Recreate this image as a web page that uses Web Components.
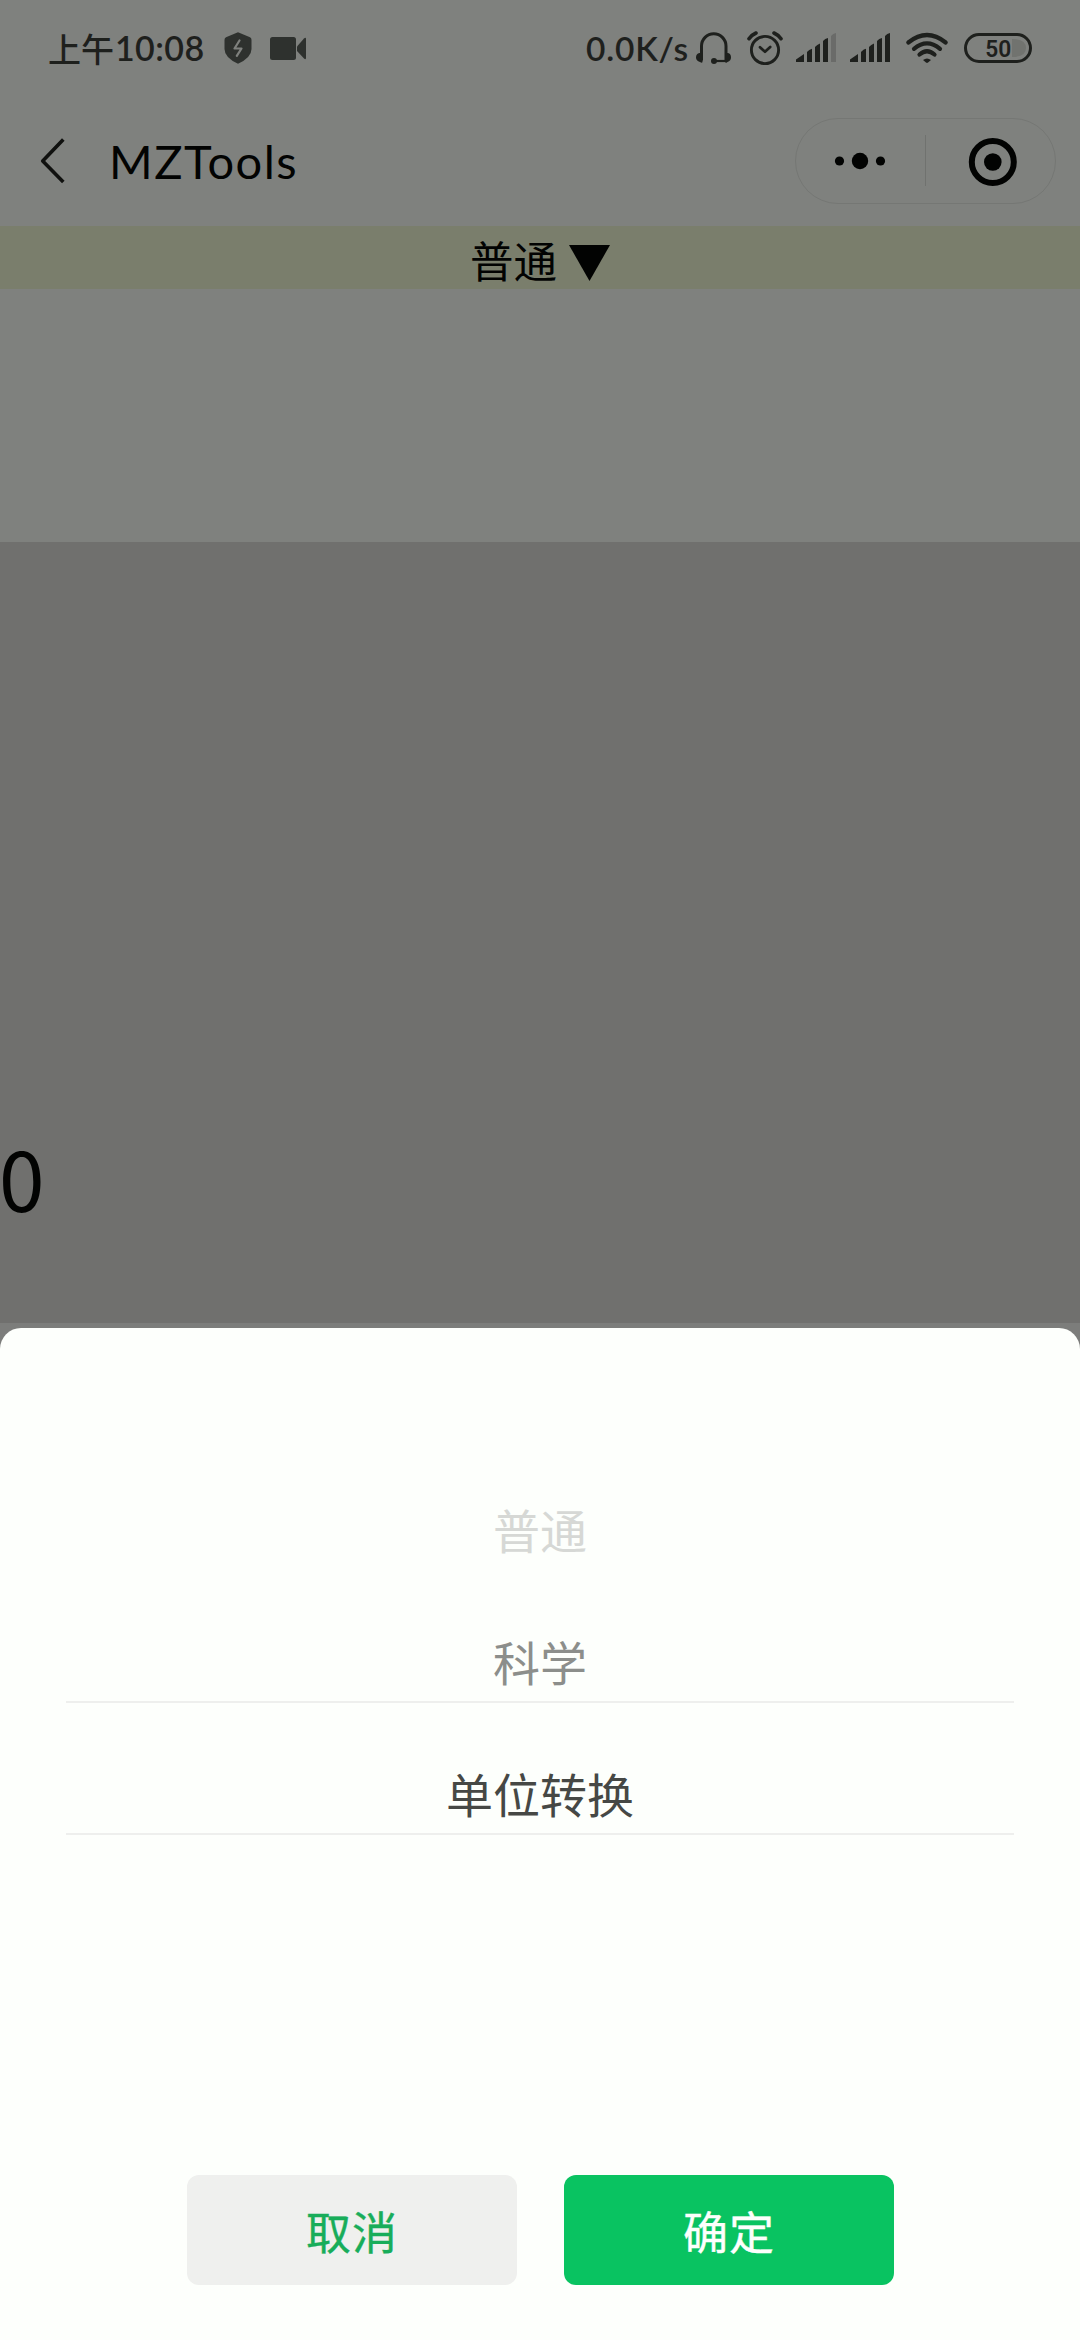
<!DOCTYPE html>
<html lang="zh-CN">
<head>
<meta charset="utf-8">
<title>MZTools</title>
<style>
html,body{margin:0;padding:0}
body{width:1080px;height:2340px;overflow:hidden;background:#7f817e;font-family:"Noto Sans CJK SC",sans-serif}
</style>
</head>
<body>
<mz-app></mz-app>
<script>
function define(name, html) {
  const t = document.createElement('template');
  t.innerHTML = html;
  customElements.define(name, class extends HTMLElement {
    constructor() {
      super();
      this.attachShadow({mode: 'open'}).appendChild(t.content.cloneNode(true));
    }
  });
}

define('status-bar', `
<style>
:host{display:flex;height:96px;box-sizing:border-box;padding-left:48px;color:#1e201d;align-items:flex-start;font-family:Lato,"Noto Sans CJK SC",sans-serif;font-weight:600}
.t{white-space:nowrap;line-height:40px;margin-top:28px;flex:none}
.cn{font:500 33px/40px "Noto Sans CJK SC",sans-serif;width:67px}
.clock{font-size:34px;width:109px;letter-spacing:.4px}
.rate{font-size:33.5px;width:108px;padding-left:2px;letter-spacing:.8px}
svg{display:block;flex:none}
</style>
<span class="t cn">上午</span><span class="t clock">10:08</span>
<svg width="360" height="96" viewBox="224 0 360 96">
  <path d="M238 32.300 L250 37.200 Q251.500 38 251.500 40 V49 Q251.500 57.500 238 63.800 Q224.500 57.500 224.500 49 V40 Q224.500 38 226 37.200Z" fill="#2e312e"/>
  <path d="M239.500 40.500 L234.500 48.500 H241.500 L236.800 55.800" fill="none" stroke="#7f817e" stroke-width="2.200" stroke-linejoin="round" stroke-linecap="round"/>
  <rect x="270" y="37" width="26" height="23" rx="2.500" fill="#2e312e"/>
  <path d="M297 46.500 L304 38.500 Q306 37 306 39 V58 Q306 60 304 58.500 L297 51Z" fill="#2e312e"/>
</svg>
<span class="t rate">0.0K/s</span>
<svg width="168" height="96" viewBox="694 0 168 96">
  <path d="M701.500 60.500 V46 A12.250 12.250 0 0 1 726 46 V60.500" fill="none" stroke="#1e201d" stroke-width="3"/>
  <path d="M702.500 53 V62 Q702 63.500 700 62 Q696 60.500 696 57.500 Q696 53.500 699.500 53ZM725 53 V62 Q726 63.500 727.500 62 Q731 60.500 731 57.500 Q731 53.500 728 53Z" fill="#1e201d"/>
  <path d="M714 61 H727" stroke="#1e201d" stroke-width="2.200"/><circle cx="714" cy="61" r="3" fill="#1e201d"/>
  <circle cx="765" cy="50" r="13.600" fill="none" stroke="#1e201d" stroke-width="2.900"/>
  <path d="M749 38.700 Q751.500 35 756 33 M781 38.700 Q778.500 35 774 33" fill="none" stroke="#1e201d" stroke-width="3.600" stroke-linecap="round"/>
  <path d="M760 47.200 L765 51.800 L770.200 47" fill="none" stroke="#1e201d" stroke-width="2.700" stroke-linecap="round" stroke-linejoin="round"/>
  <path fill="#1e201d" d="M796 62 V59.500 L804 54 V62ZM807 62 V52 Q809 49.500 812 48.800 V62ZM815 62 V47 Q817 44.500 820 43.500 V62ZM823 62 V41 Q825 38.500 828 38 V62Z"/>
  <path d="M831 62 V36 Q833 33.500 836 33 V62Z" fill="#6a6b69"/>
  <path fill="#1e201d" d="M850 62 V59.500 L858 54 V62ZM861 62 V52 L862 51V62Z"/>
</svg>
<svg width="218" height="96" viewBox="862 0 218 96">
  <path fill="#1e201d" d="M861 62 V52 Q863 49.500 866 48.800 V62ZM869 62 V47 Q871 44.500 874 43.500 V62ZM877 62 V41 Q879 38.500 882 38 V62ZM885 62 V36 Q887 33.500 890 33 V62Z"/>
  <g fill="none" stroke="#1e201d" stroke-width="4.200" stroke-linecap="round"><path d="M908.300 42.500 Q927 27.500 945.700 42.500M914 48.800 Q927 38 940 48.800M919.500 54.500 Q927 48 934.500 54.500"/></g>
  <path d="M923 60 Q927 57 931 60 L928 62.600 Q927 63.300 926 62.600Z" fill="#1e201d"/>
  <path d="M1012 39 Q1026 39 1026 48 Q1026 57 1012 57Z" fill="#71736f"/>
  <rect x="965.500" y="34.500" width="65" height="27" rx="13.500" fill="none" stroke="#1e201d" stroke-width="3"/>
  <text x="998.200" y="56.700" text-anchor="middle" font-family="Roboto" font-weight="600" font-size="24" fill="#1e201d" textLength="26" lengthAdjust="spacingAndGlyphs">50</text>
</svg>`);

define('nav-capsule', `
<style>
:host{display:flex;width:261px;height:86px;box-sizing:border-box}
svg{display:block}
</style>
<svg width="261" height="86" viewBox="795 118 261 86">
  <rect x="795.500" y="118.500" width="260" height="85" rx="42.500" fill="none" stroke="#757774"/>
  <g fill="#020302"><circle cx="839.500" cy="161" r="4.600"/><circle cx="860" cy="161" r="8.200"/><circle cx="880.500" cy="161" r="4.600"/>
  <circle cx="992.800" cy="162" r="8.800"/></g>
  <path d="M925.500 135 V186" stroke="#70726f"/>
  <circle cx="992.800" cy="162" r="21" fill="none" stroke="#020302" stroke-width="6"/>
</svg>`);

define('nav-bar', `
<style>
:host{display:flex;height:130px;box-sizing:border-box;padding:22px 24px 0 0;align-items:flex-start}
svg{display:block;flex:none}
.title{flex:1;font:400 47px/56px Lato,sans-serif;letter-spacing:1.5px;color:#020302;margin:15px 0 0 4px;white-space:nowrap}
</style>
<svg width="105" height="86" viewBox="0 118 105 86"><path d="M63.300 139.500 L42.700 161 L63.300 182" fill="none" stroke="#10110f" stroke-width="3.600" stroke-linejoin="round"/></svg>
<span class="title"><slot></slot></span>
<nav-capsule></nav-capsule>`);

define('mode-bar', `
<style>
:host{display:flex;height:63px;background:#7a7e6c;justify-content:center;align-items:flex-start;color:#020302;font:400 43.500px/63px "Noto Sans CJK SC",sans-serif;gap:12px}
span{margin-top:2px;height:61px}
svg{display:block;margin-top:19px}
</style>
<span><slot></slot></span>
<svg width="41" height="36" viewBox="0 0 41 36"><path d="M0 0H41L20.500 36Z" fill="#020302"/></svg>`);

define('calc-display', `
<style>
:host{display:flex;flex-direction:column}
.gap{height:253px;background:#7f817e}
.screen{height:781px;background:#70706e;display:flex;align-items:flex-end}
.n{font:400 82px/100px "Noto Sans CJK SC",sans-serif;color:#020302;padding-bottom:96px;margin-left:-1px}
</style>
<div class="gap"></div>
<div class="screen"><span class="n"><slot></slot></span></div>`);

define('picker-item', `
<style>
:host{display:flex;height:132px;box-sizing:border-box;justify-content:center;align-items:flex-end;padding-bottom:5px;margin:0 66px;border-bottom:2px solid transparent;font:400 47px/70px "Noto Sans CJK SC",sans-serif;color:#464845}
:host([line]){border-bottom-color:#eeefed}
:host([level="1"]){color:#8c8e8b}
:host([level="2"]){color:#d6d8d5}
</style><slot></slot>`);

define('picker-button', `
<style>
:host{display:flex;width:330px;height:110px;border-radius:12px;justify-content:center;align-items:center;background:#eff0ee;color:#18ad5a;font:400 45px/66px "Noto Sans CJK SC",sans-serif;letter-spacing:1px;-webkit-text-stroke:.4px currentColor}
:host([primary]){background:#09c361;color:#fdfffc}
span{margin-top:1px}
</style><span><slot></slot></span>`);

define('bottom-sheet', `
<style>
:host{display:flex;flex-direction:column;height:1012px;margin-top:5px;box-sizing:border-box;border-radius:21px 21px 0 0;background:#fdfffc;padding-top:111px}
.actions{display:flex;gap:47px;margin:auto 0 55px 187px}
</style>
<slot></slot>
<div class="actions"><slot name="actions"></slot></div>`);

define('mz-app', `
<style>
:host{display:flex;flex-direction:column;width:1080px;height:2340px;background:#7c7d7b}
.top{background:#7f817e}
</style>
<div class="top"><status-bar></status-bar><nav-bar>MZTools</nav-bar></div>
<mode-bar>普通</mode-bar>
<calc-display>0</calc-display>
<bottom-sheet>
  <picker-item level="2">普通</picker-item>
  <picker-item level="1" line>科学</picker-item>
  <picker-item line>单位转换</picker-item>
  <picker-button slot="actions">取消</picker-button>
  <picker-button slot="actions" primary>确定</picker-button>
</bottom-sheet>`);
</script>
</body>
</html>
